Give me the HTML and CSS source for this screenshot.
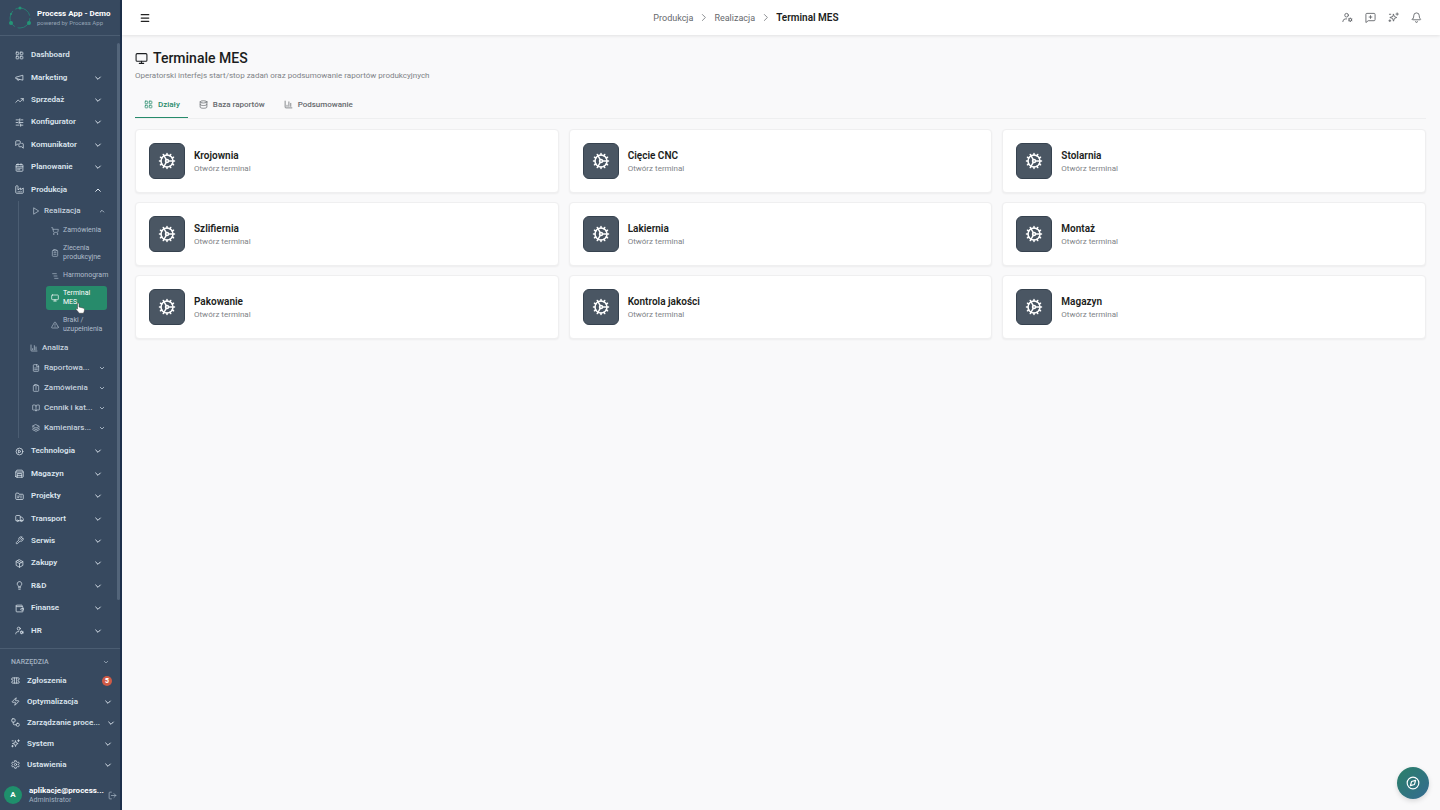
FILE: index.html
```html
<!DOCTYPE html>
<html lang="pl">
<head>
    <meta charset="UTF-8">
    <meta name="viewport" content="width=device-width, initial-scale=1.0">
    <title>Terminal MES</title>
    <link rel="stylesheet" href="styles.css">
</head>
<body>

    <!-- Icon set -->
    <svg class="sprite" aria-hidden="true">
        <symbol id="grid" viewBox="0 0 24 24"><rect x="3" y="3" width="7" height="7" rx="1.5"/><rect x="14" y="3" width="7" height="7" rx="1.5"/><rect x="3" y="14" width="7" height="7" rx="1.5"/><rect x="14" y="14" width="7" height="7" rx="1.5"/></symbol>
        <symbol id="megaphone" viewBox="0 0 24 24"><path d="M3 11l18-5v13L3 15z"/><path d="M11.6 17.3a3 3 0 0 1-5.8-1.6"/></symbol>
        <symbol id="trend" viewBox="0 0 24 24"><path d="M2 17l6.5-6.5 5 5L22 7"/><path d="M16 7h6v6"/></symbol>
        <symbol id="sliders" viewBox="0 0 24 24"><path d="M3 5h10M17 5h4M3 12h4M11 12h10M3 19h8M15 19h6M13 2v6M11 9v6M15 16v6"/></symbol>
        <symbol id="chats" viewBox="0 0 24 24"><path d="M14 9a2 2 0 0 1-2 2H6l-4 4V4a2 2 0 0 1 2-2h8a2 2 0 0 1 2 2z"/><path d="M18 9h2a2 2 0 0 1 2 2v11l-4-4h-6a2 2 0 0 1-2-2v-1"/></symbol>
        <symbol id="calendar" viewBox="0 0 24 24"><rect x="3" y="4" width="18" height="18" rx="2"/><path d="M8 2v4M16 2v4M3 10h18M7 14h2M11 14h2M15 14h2M7 18h2M11 18h2"/></symbol>
        <symbol id="factory" viewBox="0 0 24 24"><path d="M2 20a2 2 0 0 0 2 2h16a2 2 0 0 0 2-2V8l-7 5V8l-7 5V4a2 2 0 0 0-2-2H4a2 2 0 0 0-2 2z"/><path d="M8 18h1M12 18h1M16 18h1"/></symbol>
        <symbol id="play" viewBox="0 0 24 24"><path d="M6 3l14 9-14 9z"/></symbol>
        <symbol id="cart" viewBox="0 0 24 24"><circle cx="8" cy="21" r="1"/><circle cx="19" cy="21" r="1"/><path d="M2 2h3l2.6 12.4a2 2 0 0 0 2 1.6h9a2 2 0 0 0 2-1.6L22 7H6"/></symbol>
        <symbol id="clipboard" viewBox="0 0 24 24"><rect x="8" y="2" width="8" height="4" rx="1"/><path d="M16 4h2a2 2 0 0 1 2 2v14a2 2 0 0 1-2 2H6a2 2 0 0 1-2-2V6a2 2 0 0 1 2-2h2M9 11h6M9 16h6"/></symbol>
        <symbol id="clipalert" viewBox="0 0 24 24"><rect x="8" y="2" width="8" height="4" rx="1"/><path d="M16 4h2a2 2 0 0 1 2 2v14a2 2 0 0 1-2 2H6a2 2 0 0 1-2-2V6a2 2 0 0 1 2-2h2M12 10v4M12 17v1"/></symbol>
        <symbol id="gantt" viewBox="0 0 24 24"><path d="M5 5h11M9 12h9M11 19h10"/></symbol>
        <symbol id="monitor" viewBox="0 0 24 24"><rect x="2" y="3" width="20" height="14" rx="2"/><path d="M8 21h8M12 17v4"/></symbol>
        <symbol id="warning" viewBox="0 0 24 24"><path d="M21.7 18l-8-14a2 2 0 0 0-3.4 0l-8 14A2 2 0 0 0 4 21h16a2 2 0 0 0 1.700-3z"/><path d="M12 9v4M12 17v.5"/></symbol>
        <symbol id="chart" viewBox="0 0 24 24"><path d="M3 3v16a2 2 0 0 0 2 2h16M8 17v-3M13 17V5M18 17V9"/></symbol>
        <symbol id="file" viewBox="0 0 24 24"><path d="M15 2H6a2 2 0 0 0-2 2v16a2 2 0 0 0 2 2h12a2 2 0 0 0 2-2V7z"/><path d="M14 2v6h6M8 12h8M8 17h8"/></symbol>
        <symbol id="book" viewBox="0 0 24 24"><path d="M12 7v14M3 18a1 1 0 0 1-1-1V4a1 1 0 0 1 1-1h5a4 4 0 0 1 4 4 4 4 0 0 1 4-4h5a1 1 0 0 1 1 1v13a1 1 0 0 1-1 1h-6a3 3 0 0 0-3 3 3 3 0 0 0-3-3z"/></symbol>
        <symbol id="layers" viewBox="0 0 24 24"><path d="M12 2l10 5-10 5L2 7zM2 12l10 5 10-5M2 17l10 5 10-5"/></symbol>
        <symbol id="cog" viewBox="0 0 24 24"><circle cx="12" cy="12" r="8"/><circle cx="12" cy="12" r="2"/><path d="M12 2v2M12 20v2M2 12h2M14 12h8M7 3.300l1 1.700M16 19l1 1.700M3.300 7L5 8M19 16l1.700 1M3.300 17L5 16M19 8l1.700-1M17 3.300L16 5M8 19l-1 1.700M11 10.300L8 5M11 13.700L8 19"/></symbol>
        <symbol id="disc" viewBox="0 0 24 24"><circle cx="12" cy="12" r="9"/><path d="M10 8.500l6 3.500-6 3.500z"/></symbol>
        <symbol id="warehouse" viewBox="0 0 24 24"><path d="M2 20V8l3-5h14l3 5v12a2 2 0 0 1-2 2H4a2 2 0 0 1-2-2zM2 8h20M6 22V12h12v10M6 17h12"/></symbol>
        <symbol id="folder" viewBox="0 0 24 24"><path d="M4 20a2 2 0 0 1-2-2V5a2 2 0 0 1 2-2h5l2 3h9a2 2 0 0 1 2 2v10a2 2 0 0 1-2 2zM7 11h5M7 15h3M16 10v6"/></symbol>
        <symbol id="truck" viewBox="0 0 24 24"><path d="M14 18V6a2 2 0 0 0-2-2H4a2 2 0 0 0-2 2v11a1 1 0 0 0 1 1h2M15 18H9M19 18h2a1 1 0 0 0 1-1v-4l-4-5h-4"/><circle cx="17" cy="18" r="2"/><circle cx="7" cy="18" r="2"/></symbol>
        <symbol id="wrench" viewBox="0 0 24 24"><path d="M14.700 6.300a1 1 0 0 0 0 1.400l1.600 1.600a1 1 0 0 0 1.400 0l3.800-3.800a6 6 0 0 1-7.900 7.900l-6.900 6.900a2.100 2.100 0 0 1-3-3l6.900-6.900a6 6 0 0 1 7.900-7.900z"/></symbol>
        <symbol id="box" viewBox="0 0 24 24"><path d="M12 2l9 5v10l-9 5-9-5V7zM3 7l9 5 9-5M12 12v10M7.500 4.500l9 5"/></symbol>
        <symbol id="bulb" viewBox="0 0 24 24"><path d="M15 14c.2-1 .7-1.700 1.500-2.500A6 6 0 1 0 6 8c0 1.300.3 2.500 1.500 3.500.8.8 1.300 1.500 1.500 2.500zM9 18h6M10 22h4"/></symbol>
        <symbol id="wallet" viewBox="0 0 24 24"><path d="M19 7V4a1 1 0 0 0-1-1H5a2 2 0 0 0 0 4h15a1 1 0 0 1 1 1v4M3 5v14a2 2 0 0 0 2 2h15a1 1 0 0 0 1-1v-4M22 12h-5a2 2 0 0 0 0 4h5z"/></symbol>
        <symbol id="usercog" viewBox="0 0 24 24"><circle cx="10" cy="7" r="4"/><path d="M2 21v-1a6 6 0 0 1 6-5h2"/><circle cx="18" cy="17" r="3"/><path d="M18 13v1M18 20v1M14.500 15l1 .5M20.500 18.500l1 .5M21.500 15l-1 .5M15.500 18.500l-1 .5"/></symbol>
        <symbol id="ticket" viewBox="0 0 24 24"><path d="M2 9a3 3 0 0 1 0 6v2a2 2 0 0 0 2 2h16a2 2 0 0 0 2-2v-2a3 3 0 0 1 0-6V7a2 2 0 0 0-2-2H4a2 2 0 0 0-2 2zM9 5v14M15 5v14"/></symbol>
        <symbol id="zap" viewBox="0 0 24 24"><path d="M4 14a1 1 0 0 1-.8-1.600l9.900-10.200a.5.5 0 0 1 .9.500l-2 6A1 1 0 0 0 13 10h7a1 1 0 0 1 .8 1.600l-9.900 10.200a.5.5 0 0 1-.9-.5l2-6A1 1 0 0 0 11 14z"/></symbol>
        <symbol id="flow" viewBox="0 0 24 24"><rect x="2" y="2" width="9" height="9" rx="3"/><rect x="14" y="14" width="8" height="8" rx="3"/><path d="M6 11v4a3 3 0 0 0 3 3h5"/></symbol>
        <symbol id="sparkles" viewBox="0 0 24 24"><path d="M12 5l2 5 5 2-5 2-2 6-2-6-6-2 6-2zM20 2v5M17.500 4.500h5M4 17v4M2 19h4M3 5h3"/></symbol>
        <symbol id="settings" viewBox="0 0 24 24"><path d="M10 2h4l.7 3 2.300 1.300 3-.9 2 3.400L19.800 11v2l2.200 2.200-2 3.400-3-.9-2.300 1.300-.7 3h-4l-.7-3L7 17.700l-3 .9-2-3.400L4.200 13v-2L2 8.800l2-3.400 3 .9L9.300 5z"/><circle cx="12" cy="12" r="3"/></symbol>
        <symbol id="logout" viewBox="0 0 24 24"><path d="M9 21H5a2 2 0 0 1-2-2V5a2 2 0 0 1 2-2h4M16 17l5-5-5-5M21 12H9"/></symbol>
        <symbol id="database" viewBox="0 0 24 24"><ellipse cx="12" cy="5" rx="9" ry="3"/><path d="M3 5v14c0 4 18 4 18 0V5M3 12c0 4 18 4 18 0"/></symbol>
        <symbol id="message" viewBox="0 0 24 24"><path d="M22 17a2 2 0 0 1-2 2H7l-5 4V5a2 2 0 0 1 2-2h16a2 2 0 0 1 2 2zM12 8v6M9 11h6"/></symbol>
        <symbol id="bell" viewBox="0 0 24 24"><path d="M10 21a2 2 0 0 0 4 0M3.300 15.300A1 1 0 0 0 4 17h16a1 1 0 0 0 .7-1.700C19.400 14 18 12.500 18 8A6 6 0 0 0 6 8c0 4.500-1.400 6-2.700 7.300z"/></symbol>
        <symbol id="compass" viewBox="0 0 24 24"><circle cx="12" cy="12" r="10"/><path d="M16.500 7.500l-2 7-7 2 2-7z"/></symbol>
        <symbol id="menu" viewBox="0 0 24 24"><path d="M3 4h18M3 12h18M3 20h18"/></symbol>
        <symbol id="down" viewBox="0 0 24 24"><path d="M5 9l7 7 7-7"/></symbol>
        <symbol id="up" viewBox="0 0 24 24"><path d="M5 16l7-7 7 7"/></symbol>
        <symbol id="right" viewBox="0 0 24 24"><path d="M9 4l8 8-8 8"/></symbol>
    </svg>

    <div class="app">
        <aside class="sidebar">
            <header class="brand">
                <svg class="logo" viewBox="0 0 24 24" aria-hidden="true">
                    <circle class="logo-ring" cx="12" cy="12" r="10"/>
                    <circle cx="12" cy="2" r="1.500"/>
                    <circle cx="3" cy="17" r="2"/>
                    <circle cx="21" cy="17" r="2"/>
                    <circle cx="3" cy="8" r="1"/>
                </svg>
                <div>
                    <strong class="brand-name">Process App - Demo</strong>
                    <small class="brand-note">powered by Process App</small>
                </div>
            </header>

            <nav class="nav" aria-label="Menu">
                <div class="group group-top">
                    <a class="row" href="#"><svg class="icon"><use href="#grid"/></svg><span>Dashboard</span></a>
                    <button class="row"><svg class="icon"><use href="#megaphone"/></svg><span>Marketing</span><svg class="chevron"><use href="#down"/></svg></button>
                    <button class="row"><svg class="icon"><use href="#trend"/></svg><span>Sprzedaż</span><svg class="chevron"><use href="#down"/></svg></button>
                    <button class="row"><svg class="icon"><use href="#sliders"/></svg><span>Konfigurator</span><svg class="chevron"><use href="#down"/></svg></button>
                    <button class="row"><svg class="icon"><use href="#chats"/></svg><span>Komunikator</span><svg class="chevron"><use href="#down"/></svg></button>
                    <button class="row"><svg class="icon"><use href="#calendar"/></svg><span>Planowanie</span><svg class="chevron"><use href="#down"/></svg></button>
                    <button class="row" aria-expanded="true"><svg class="icon"><use href="#factory"/></svg><span>Produkcja</span><svg class="chevron"><use href="#up"/></svg></button>
                </div>

                <div class="submenu">
                    <button class="row sub"><svg class="icon"><use href="#play"/></svg><span>Realizacja</span><svg class="chevron"><use href="#up"/></svg></button>
                    <div class="leaves">
                        <a class="leaf" href="#"><svg class="icon"><use href="#cart"/></svg><span>Zamówienia</span></a>
                        <a class="leaf" href="#"><svg class="icon"><use href="#clipboard"/></svg><span>Zlecenia produkcyjne</span></a>
                        <a class="leaf" href="#"><svg class="icon"><use href="#gantt"/></svg><span>Harmonogram</span></a>
                        <a class="leaf active" href="#" aria-current="page">
                            <svg class="icon"><use href="#monitor"/></svg><span>Terminal<br>MES</span>
                            <svg class="pointer" viewBox="0 0 20 24" aria-hidden="true"><path d="M6 2c1.500 0 2 1 2 2v6l8 2c2 .5 3 1.500 3 3.500 0 3-1 4-2 7H8c-1-3-4-5-6-8 0-1.500 1.500-2 3-.5V4c0-1 0-2 1-2z"/></svg>
                        </a>
                        <a class="leaf" href="#"><svg class="icon"><use href="#warning"/></svg><span>Braki / uzupełnienia</span></a>
                    </div>
                    <a class="row sub sub-link" href="#"><svg class="icon"><use href="#chart"/></svg><span>Analiza</span></a>
                    <button class="row sub"><svg class="icon"><use href="#file"/></svg><span>Raportowa...</span><svg class="chevron"><use href="#down"/></svg></button>
                    <button class="row sub"><svg class="icon"><use href="#clipalert"/></svg><span>Zamówienia</span><svg class="chevron"><use href="#down"/></svg></button>
                    <button class="row sub"><svg class="icon"><use href="#book"/></svg><span>Cennik i kat...</span><svg class="chevron"><use href="#down"/></svg></button>
                    <button class="row sub"><svg class="icon"><use href="#layers"/></svg><span>Kamieniars...</span><svg class="chevron"><use href="#down"/></svg></button>
                </div>

                <div class="group group-bottom">
                    <button class="row"><svg class="icon"><use href="#disc"/></svg><span>Technologia</span><svg class="chevron"><use href="#down"/></svg></button>
                    <button class="row"><svg class="icon"><use href="#warehouse"/></svg><span>Magazyn</span><svg class="chevron"><use href="#down"/></svg></button>
                    <button class="row"><svg class="icon"><use href="#folder"/></svg><span>Projekty</span><svg class="chevron"><use href="#down"/></svg></button>
                    <button class="row"><svg class="icon"><use href="#truck"/></svg><span>Transport</span><svg class="chevron"><use href="#down"/></svg></button>
                    <button class="row"><svg class="icon"><use href="#wrench"/></svg><span>Serwis</span><svg class="chevron"><use href="#down"/></svg></button>
                    <button class="row"><svg class="icon"><use href="#box"/></svg><span>Zakupy</span><svg class="chevron"><use href="#down"/></svg></button>
                    <button class="row"><svg class="icon"><use href="#bulb"/></svg><span>R&amp;D</span><svg class="chevron"><use href="#down"/></svg></button>
                    <button class="row"><svg class="icon"><use href="#wallet"/></svg><span>Finanse</span><svg class="chevron"><use href="#down"/></svg></button>
                    <button class="row"><svg class="icon"><use href="#usercog"/></svg><span>HR</span><svg class="chevron"><use href="#down"/></svg></button>
                </div>
                <span class="scroll-thumb"></span>
            </nav>

            <div class="tools">
                <button class="tools-title"><span>NARZĘDZIA</span><svg class="chevron"><use href="#down"/></svg></button>
                <a class="row" href="#"><svg class="icon"><use href="#ticket"/></svg><span>Zgłoszenia</span><b class="badge">5</b></a>
                <button class="row"><svg class="icon"><use href="#zap"/></svg><span>Optymalizacja</span><svg class="chevron"><use href="#down"/></svg></button>
                <button class="row"><svg class="icon"><use href="#flow"/></svg><span>Zarządzanie proce...</span><svg class="chevron"><use href="#down"/></svg></button>
                <button class="row"><svg class="icon"><use href="#sparkles"/></svg><span>System</span><svg class="chevron"><use href="#down"/></svg></button>
                <button class="row"><svg class="icon"><use href="#settings"/></svg><span>Ustawienia</span><svg class="chevron"><use href="#down"/></svg></button>
            </div>

            <footer class="user">
                <span class="avatar">A</span>
                <div class="user-info">
                    <strong>aplikacje@process...</strong>
                    <small>Administrator</small>
                </div>
                <button class="logout" aria-label="Wyloguj"><svg class="icon"><use href="#logout"/></svg></button>
            </footer>
        </aside>

        <div class="page">
            <header class="topbar">
                <button class="top-btn menu-btn" aria-label="Menu"><svg class="icon"><use href="#menu"/></svg></button>
                <nav class="crumbs" aria-label="Ścieżka">
                    <a href="#">Produkcja</a>
                    <svg class="icon"><use href="#right"/></svg>
                    <a href="#">Realizacja</a>
                    <svg class="icon"><use href="#right"/></svg>
                    <strong>Terminal MES</strong>
                </nav>
                <div class="actions">
                    <button class="top-btn" aria-label="Konto"><svg class="icon"><use href="#usercog"/></svg></button>
                    <button class="top-btn" aria-label="Wiadomość"><svg class="icon"><use href="#message"/></svg></button>
                    <button class="top-btn" aria-label="Asystent"><svg class="icon"><use href="#sparkles"/></svg></button>
                    <button class="top-btn" aria-label="Powiadomienia"><svg class="icon"><use href="#bell"/></svg></button>
                </div>
            </header>

            <main class="content">
                <h1><svg class="icon"><use href="#monitor"/></svg>Terminale MES</h1>
                <p class="lead">Operatorski interfejs start/stop zadań oraz podsumowanie raportów produkcyjnych</p>

                <div class="tabs" role="tablist">
                    <button class="tab selected" role="tab" aria-selected="true"><svg class="icon"><use href="#grid"/></svg>Działy</button>
                    <button class="tab" role="tab" aria-selected="false"><svg class="icon"><use href="#database"/></svg>Baza raportów</button>
                    <button class="tab" role="tab" aria-selected="false"><svg class="icon"><use href="#chart"/></svg>Podsumowanie</button>
                </div>

                <div class="cards">
                    <a class="card" href="#"><span class="tile"><svg class="icon"><use href="#cog"/></svg></span><span class="card-text"><strong>Krojownia</strong><small>Otwórz terminal</small></span></a>
                    <a class="card" href="#"><span class="tile"><svg class="icon"><use href="#cog"/></svg></span><span class="card-text"><strong>Cięcie CNC</strong><small>Otwórz terminal</small></span></a>
                    <a class="card" href="#"><span class="tile"><svg class="icon"><use href="#cog"/></svg></span><span class="card-text"><strong>Stolarnia</strong><small>Otwórz terminal</small></span></a>
                    <a class="card" href="#"><span class="tile"><svg class="icon"><use href="#cog"/></svg></span><span class="card-text"><strong>Szlifiernia</strong><small>Otwórz terminal</small></span></a>
                    <a class="card" href="#"><span class="tile"><svg class="icon"><use href="#cog"/></svg></span><span class="card-text"><strong>Lakiernia</strong><small>Otwórz terminal</small></span></a>
                    <a class="card" href="#"><span class="tile"><svg class="icon"><use href="#cog"/></svg></span><span class="card-text"><strong>Montaż</strong><small>Otwórz terminal</small></span></a>
                    <a class="card" href="#"><span class="tile"><svg class="icon"><use href="#cog"/></svg></span><span class="card-text"><strong>Pakowanie</strong><small>Otwórz terminal</small></span></a>
                    <a class="card" href="#"><span class="tile"><svg class="icon"><use href="#cog"/></svg></span><span class="card-text"><strong>Kontrola jakości</strong><small>Otwórz terminal</small></span></a>
                    <a class="card" href="#"><span class="tile"><svg class="icon"><use href="#cog"/></svg></span><span class="card-text"><strong>Magazyn</strong><small>Otwórz terminal</small></span></a>
                </div>
            </main>
        </div>
    </div>

    <button class="help" aria-label="Przewodnik"><svg class="icon"><use href="#compass"/></svg></button>

</body>
</html>
```
FILE: styles.css
```css
* {
    box-sizing: border-box;
}
body {
    margin: 0;
    font-family: Roboto, "Liberation Sans", sans-serif;
    font-size: 8px;
    line-height: 12px;
    color: #1b1d20;
    background-color: #f9f9fa;
}
a {
    color: inherit;
    text-decoration: none;
}
button {
    margin: 0;
    padding: 0;
    border: none;
    background: none;
    color: inherit;
    font: inherit;
    text-align: left;
    cursor: pointer;
}
small {
    font-size: 8px;
}
.sprite {
    display: none;
}
.icon,
.chevron {
    flex: none;
    width: 9px;
    height: 9px;
    fill: none;
    stroke: currentColor;
    stroke-width: 2;
    stroke-linecap: round;
    stroke-linejoin: round;
}
.chevron {
    width: 8px;
    height: 8px;
    margin-left: auto;
    stroke-width: 3;
}
.app {
    display: flex;
    min-height: 100vh;
}

/* Sidebar */
.sidebar {
    display: flex;
    flex-direction: column;
    flex: none;
    width: 122px;
    height: 100vh;
    color: #dce5ee;
    background-color: #37495f;
    border-right: 2px solid #1d304b;
}
.brand {
    display: flex;
    align-items: center;
    gap: 5px;
    flex: none;
    height: 36px;
    padding-left: 8px;
    border-bottom: 1px solid #4b5d72;
}
.brand > div {
    display: flex;
    flex-direction: column;
}
.logo {
    width: 24px;
    height: 24px;
    fill: #249576;
}
.logo-ring {
    fill: none;
    stroke: #287c73;
    stroke-dasharray: 18 3;
}
.brand-name {
    font-size: 8px;
    line-height: 10px;
    color: #fff;
    white-space: nowrap;
}
.brand-note {
    font-size: 6px;
    line-height: 8px;
    color: #94a3b4;
}
.nav {
    position: relative;
    flex: 1;
    min-height: 0;
    padding-top: 8px;
    overflow: hidden;
}
.scroll-thumb {
    position: absolute;
    top: 7px;
    right: 0;
    width: 3px;
    height: 91%;
    border-radius: 2px;
    background-color: #53657a;
}
.group {
    display: grid;
    grid-auto-rows: 1fr;
}
.group-top {
    height: 157px;
}
.group-bottom {
    height: 202px;
    margin-top: 2px;
}
.row {
    display: flex;
    align-items: center;
    gap: 7px;
    width: 100%;
    padding: 0 18px 0 15px;
    font-weight: 600;
}
.row span {
    white-space: nowrap;
}
.submenu {
    margin-left: 18px;
    border-left: 1px solid #4b5d72;
}
.row.sub {
    height: 20px;
    gap: 4px;
    padding: 0 15px 0 13px;
    font-weight: 500;
    color: #c6d2de;
}
.row.sub.sub-link {
    padding-left: 11px;
}
.row.sub .icon,
.leaf .icon {
    width: 8px;
    height: 8px;
}
.row.sub .chevron {
    width: 6px;
    height: 6px;
}
.leaves {
    display: flex;
    flex-direction: column;
    gap: 3px;
    padding: 2px 13px 1px 27px;
}
.leaf {
    position: relative;
    display: flex;
    align-items: center;
    gap: 4px;
    padding: 3px 0 3px 5px;
    border-radius: 3px;
    font-size: 7px;
    line-height: 9px;
    color: #afbdcb;
}
.leaf.active {
    color: #fff;
    background-color: #278b6b;
}
.pointer {
    position: absolute;
    top: 15px;
    left: 29px;
    width: 10px;
    height: 14px;
    fill: #fff;
    stroke: #333;
}
.tools {
    flex: none;
    display: grid;
    grid-template-columns: minmax(0, 1fr);
    grid-template-rows: 17px;
    grid-auto-rows: 21px;
    padding: 4px 0 2px;
    border-top: 1px solid #4b5d72;
}
.tools .row {
    padding: 0 8px 0 11px;
}
.tools-title {
    display: flex;
    align-items: center;
    width: 100%;
    padding: 0 11px;
    font-weight: 500;
    font-size: 7px;
    color: #a3b1c0;
}
.tools-title .chevron {
    width: 6px;
    height: 6px;
}
.badge {
    width: 10px;
    height: 10px;
    margin-left: auto;
    border-radius: 50%;
    font-size: 7px;
    line-height: 10px;
    text-align: center;
    color: #fff;
    background-color: #cf5b46;
}
.user {
    display: flex;
    align-items: center;
    gap: 7px;
    flex: none;
    height: 33px;
    padding: 3px 3px 0 4px;
}
.avatar {
    flex: none;
    width: 18px;
    height: 18px;
    border-radius: 50%;
    font-weight: 700;
    line-height: 18px;
    text-align: center;
    color: #fff;
    background-color: #1f8f6c;
}
.user-info {
    display: flex;
    flex-direction: column;
    flex: 1;
    min-width: 0;
}
.user-info strong {
    font-size: 8px;
    line-height: 11px;
    color: #fff;
    white-space: nowrap;
}
.user-info small {
    font-size: 7px;
    line-height: 9px;
    color: #a3b1c0;
}
.logout {
    display: flex;
    color: #a3b1c0;
}

/* Top bar */
.page {
    flex: 1;
    min-width: 0;
}
.topbar {
    display: flex;
    align-items: center;
    justify-content: space-between;
    height: 35px;
    padding: 0 18px;
    background-color: #fff;
    box-shadow: 0 1px 3px #00000018;
}
.top-btn {
    display: flex;
    color: #66696d;
}
.top-btn .icon {
    width: 11px;
    height: 11px;
}
.menu-btn {
    color: #222;
}
.menu-btn .icon {
    width: 10px;
    height: 10px;
    stroke-width: 3;
}
.crumbs {
    display: flex;
    align-items: center;
    gap: 6px;
    font-size: 9px;
    color: #66696d;
}
.crumbs strong {
    font-size: 10px;
    font-weight: 600;
    color: #1b1d20;
}
.actions {
    display: flex;
    gap: 12px;
}

/* Content */
.content {
    padding: 14px 14px 14px 13px;
}
h1 {
    display: flex;
    align-items: center;
    gap: 5px;
    margin: 0;
    font-size: 14px;
    line-height: 18px;
    font-weight: 500;
}
h1 .icon {
    width: 13px;
    height: 13px;
}
.lead {
    margin: 3px 0 0;
    color: #808387;
}
.tabs {
    display: flex;
    margin-top: 8px;
    border-bottom: 1px solid #eeeff0;
}
.tab {
    display: flex;
    align-items: center;
    gap: 5px;
    height: 28px;
    padding: 2px 8px 0 9px;
    margin-right: 2px;
    border-bottom: 1px solid transparent;
    font-weight: 500;
    color: #66696d;
}
.tab.selected {
    color: #278b6b;
    border-bottom-color: #278b6b;
}
.cards {
    display: grid;
    grid-template-columns: repeat(3, 1fr);
    gap: 9px 10px;
    margin-top: 10px;
}
.card {
    display: flex;
    align-items: center;
    gap: 9px;
    height: 64px;
    padding: 0 13px;
    border: 1px solid #efeff0;
    border-radius: 4px;
    background-color: #fff;
    box-shadow: 0 1px 2px #0000000d;
}
.tile {
    display: flex;
    align-items: center;
    justify-content: center;
    width: 36px;
    height: 36px;
    border: 1px solid #36424f;
    border-radius: 6px;
    color: #fff;
    background-color: #4a5663;
}
.tile .icon {
    width: 18px;
    height: 18px;
}
.card-text {
    display: flex;
    flex-direction: column;
    padding-top: 2px;
}
.card-text strong {
    font-size: 10px;
    line-height: 14px;
    font-weight: 600;
}
.card-text small {
    color: #808387;
}
.help {
    position: fixed;
    right: 11px;
    bottom: 11px;
    display: flex;
    align-items: center;
    justify-content: center;
    width: 32px;
    height: 32px;
    border-radius: 50%;
    color: #fff;
    background: linear-gradient(135deg, #2a8068, #356b91);
    box-shadow: 0 2px 5px #00000022;
}
.help .icon {
    width: 14px;
    height: 14px;
}
```
